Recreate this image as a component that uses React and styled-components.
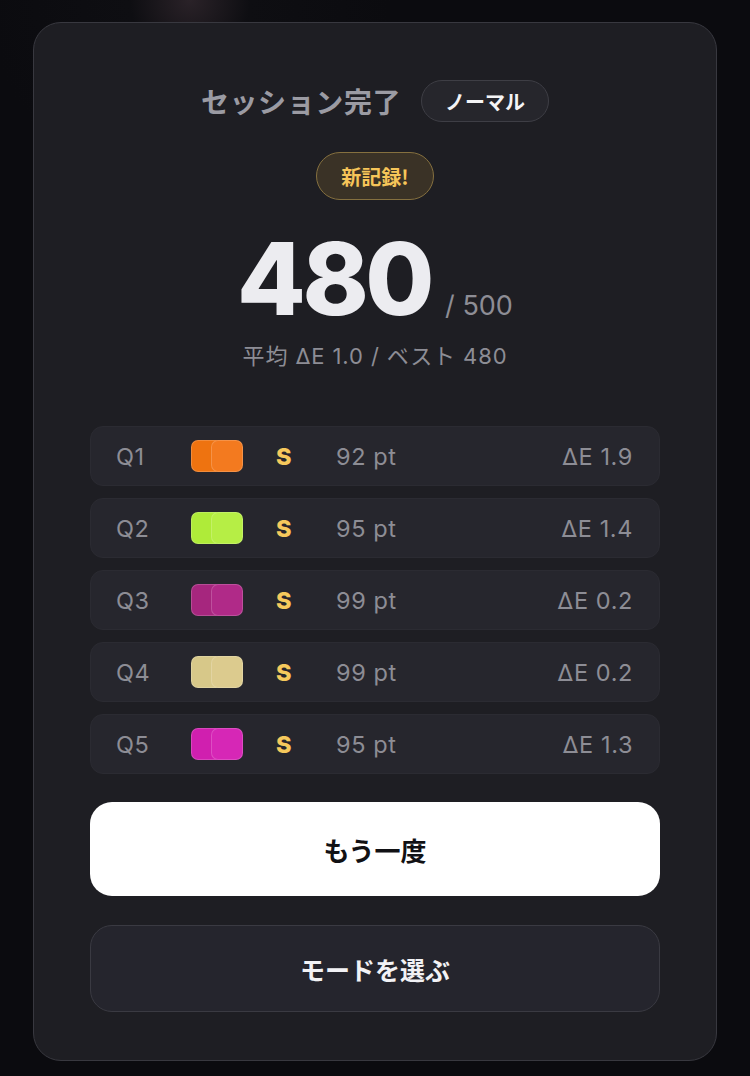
import React from 'react'
import styled, { createGlobalStyle } from 'styled-components'

const GlobalStyle = createGlobalStyle`
  html, body {
    margin: 0;
    padding: 0;
    background: #0b0b0f;
  }
  body {
    font-family: Inter, "Noto Sans CJK JP", sans-serif;
    -webkit-font-smoothing: antialiased;
  }
`

const results = [
  { q: 'Q1', target: '#ee7310', guess: '#f37a1f', grade: 'S', pt: 92, de: '1.9' },
  { q: 'Q2', target: '#afeb39', guess: '#b6ee45', grade: 'S', pt: 95, de: '1.4' },
  { q: 'Q3', target: '#a6267e', guess: '#b02a88', grade: 'S', pt: 99, de: '0.2' },
  { q: 'Q4', target: '#d7c889', guess: '#dccb8e', grade: 'S', pt: 99, de: '0.2' },
  { q: 'Q5', target: '#d01faf', guess: '#d627b6', grade: 'S', pt: 95, de: '1.3' },
]

const App = () => {
  return (
    <Page>
      <GlobalStyle />
      <Card>
        <TitleRow>
          <Title>セッション完了</Title>
          <ModeBadge>ノーマル</ModeBadge>
        </TitleRow>
        <RecordBadge>新記録!</RecordBadge>
        <ScoreLine>
          <Score>480</Score>
          <Max>/ 500</Max>
        </ScoreLine>
        <Summary>平均 ΔE 1.0 / ベスト 480</Summary>
        <List>
          {results.map((r) => (
            <Row key={r.q}>
              <QLabel>{r.q}</QLabel>
              <Swatch>
                <Chip color={r.target} />
                <Chip color={r.guess} $over />
              </Swatch>
              <Grade>{r.grade}</Grade>
              <Points>{r.pt} pt</Points>
              <Delta>ΔE {r.de}</Delta>
            </Row>
          ))}
        </List>
        <PrimaryButton>もう一度</PrimaryButton>
        <SecondaryButton>モードを選ぶ</SecondaryButton>
      </Card>
    </Page>
  )
}

export default App

const Page = styled.div`
  width: 750px;
  min-height: 1076px;
  padding-top: 22px;
  box-sizing: border-box;
  background: radial-gradient(circle at 190px 0px, #2a2228 0, #0e0e12 60px, #0b0b0f 200px);
`

const Card = styled.div`
  width: 684px;
  margin: 0 auto;
  box-sizing: border-box;
  padding: 56px 56px 48px;
  background: #1e1e23;
  border: 1.5px solid #38383f;
  border-radius: 28px;
  display: flex;
  flex-direction: column;
  align-items: center;
`

const TitleRow = styled.div`
  display: flex;
  align-items: center;
  gap: 20px;
  height: 44px;
`

const Title = styled.div`
  font-family: "Noto Sans CJK JP", sans-serif;
  font-size: 28px;
  font-weight: 700;
  color: #9b9ba3;
  letter-spacing: 0.6px;
`

const ModeBadge = styled.div`
  height: 42px;
  box-sizing: border-box;
  padding: 0 23px;
  display: flex;
  align-items: center;
  border-radius: 21px;
  background: #26262c;
  border: 1.5px solid #3e3e45;
  font-family: "Noto Sans CJK JP", sans-serif;
  font-size: 20px;
  font-weight: 700;
  color: #f4f4f6;
`

const RecordBadge = styled.div`
  margin-top: 29px;
  height: 48px;
  box-sizing: border-box;
  padding: 0 24px;
  display: flex;
  align-items: center;
  border-radius: 24px;
  background: #3a3226;
  border: 1.5px solid #85703f;
  font-family: "Noto Sans CJK JP", sans-serif;
  font-size: 20px;
  font-weight: 700;
  color: #f6c559;
`

const ScoreLine = styled.div`
  margin-top: 28px;
  display: flex;
  align-items: baseline;
  gap: 14px;
`

const Score = styled.div`
  font-family: Inter, sans-serif;
  font-size: 100px;
  line-height: 102px;
  font-weight: 800;
  color: #ececf0;
  letter-spacing: -3.5px;
`

const Max = styled.div`
  font-family: Inter, sans-serif;
  font-size: 27px;
  color: #8d8d95;
`

const Summary = styled.div`
  margin-top: 12px;
  font-family: Inter, "Noto Sans CJK JP", sans-serif;
  font-size: 22px;
  line-height: 28px;
  letter-spacing: 0.9px;
  color: #8d8d95;
`

const List = styled.div`
  margin-top: 56px;
  width: 100%;
  display: flex;
  flex-direction: column;
  gap: 12px;
`

const Row = styled.div`
  height: 60px;
  box-sizing: border-box;
  padding: 0 26px 0 25px;
  display: flex;
  align-items: center;
  background: #26262d;
  border: 1px solid #2b2b32;
  border-radius: 13px;
  font-family: Inter, sans-serif;
  font-size: 23.5px;
  letter-spacing: 0.6px;
  color: #8d8d95;
`

const QLabel = styled.div`
  width: 75px;
`

const Swatch = styled.div`
  width: 52px;
  height: 32px;
  display: flex;
`

const Chip = styled.div`
  width: 32px;
  height: 32px;
  box-sizing: border-box;
  flex-shrink: 0;
  border-radius: 7px;
  background: ${(p) => p.color};
  border: 1px solid rgba(255, 255, 255, 0.18);
  margin-left: ${(p) => (p.$over ? '-12px' : '0')};
`

const Grade = styled.div`
  margin-left: 33px;
  width: 60px;
  font-weight: 800;
  color: #f6c95c;
`

const Points = styled.div`
  flex: 1;
`

const Delta = styled.div`
  text-align: right;
`

const PrimaryButton = styled.button`
  margin-top: 28px;
  width: 100%;
  height: 94px;
  border: none;
  border-radius: 22px;
  background: #ffffff;
  font-family: "Noto Sans CJK JP", sans-serif;
  font-size: 26px;
  font-weight: 700;
  color: #111114;
`

const SecondaryButton = styled.button`
  margin-top: 29px;
  width: 100%;
  height: 87px;
  box-sizing: border-box;
  border: 1.5px solid #3a3a42;
  border-radius: 22px;
  background: #25252d;
  font-family: "Noto Sans CJK JP", sans-serif;
  font-size: 25px;
  font-weight: 700;
  color: #f2f2f5;
`
